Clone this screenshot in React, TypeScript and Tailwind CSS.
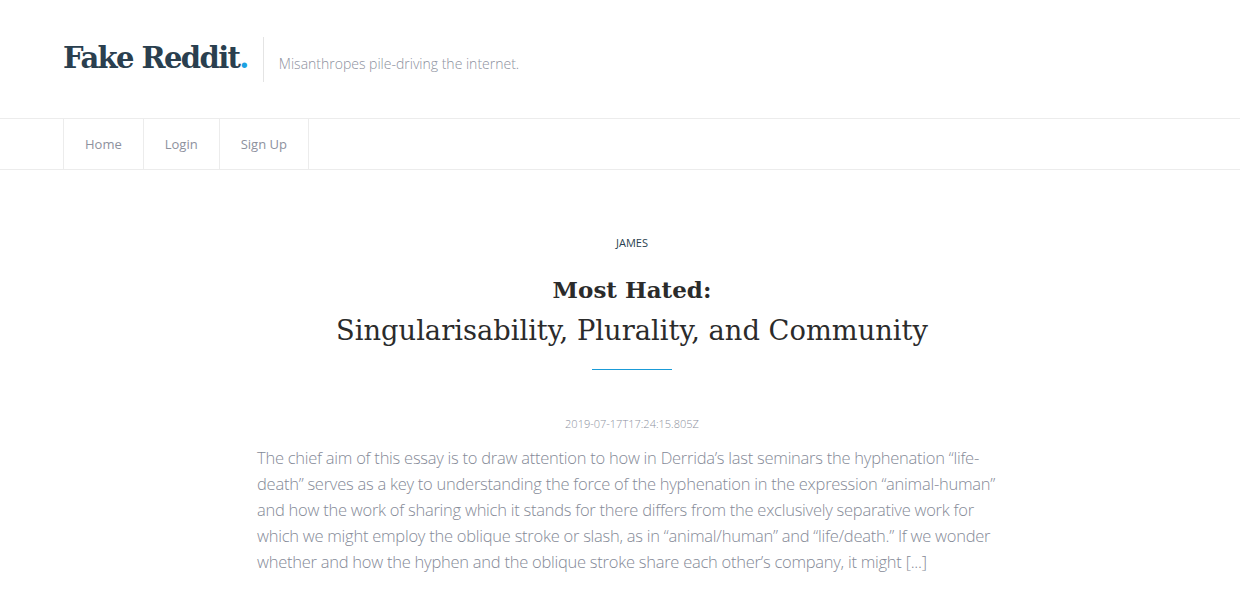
import React from 'react';

const navItems = ['Home', 'Login', 'Sign Up'];

const body =
  'The chief aim of this essay is to draw attention to how in Derrida\u2019s last seminars the hyphenation \u201clife-death\u201d serves as a key to understanding the force of the hyphenation in the expression \u201canimal-human\u201d and how the work of sharing which it stands for there differs from the exclusively separative work for which we might employ the oblique stroke or slash, as in \u201canimal/human\u201d and \u201clife/death.\u201d If we wonder whether and how the hyphen and the oblique stroke share each other\u2019s company, it might [...]';

const App: React.FC = () => {
  return (
    <div className="min-h-[596px] bg-white font-['Open_Sans',sans-serif]">
      {/* header */}
      <header className="h-[119px] border-b border-[#ececec] flex items-center px-[63px]">
        <h1 className="font-['DejaVu_Serif',serif] font-bold text-[29px] tracking-[-1.6px] text-[#2a3f4f] leading-none pb-[2px]">
          Fake Reddit<span className="text-[#1ba1e2]">.</span>
        </h1>
        <div className="ml-[15px] w-px h-[45px] bg-[#e4e4e4]" />
        <p className="ml-[15px] mt-[8px] text-[14px] font-light text-[#8d919e]">
          Misanthropes pile-driving the internet.
        </p>
      </header>

      {/* nav */}
      <nav className="h-[51px] border-b border-[#ececec] px-[63px]">
        <ul className="flex h-full border-l border-[#ececec]">
          {navItems.map((item) => (
            <li
              key={item}
              className="flex items-center pt-[2px] px-[21px] border-r border-[#ececec] text-[13px] text-[#8d919e]"
            >
              {item}
            </li>
          ))}
        </ul>
      </nav>

      {/* post */}
      <main className="flex justify-center pl-[24px] pt-[67px]">
        <article className="w-[750px] flex flex-col items-center">
          <span className="text-[11px] text-[#2a3f4f] uppercase leading-none">James</span>
          <h2 className="mt-[21px] text-center font-['DejaVu_Serif',serif] text-[#2b2b2b] leading-[41px]">
            <span className="block font-bold text-[23px]">Most Hated:</span>
            <span className="block text-[27.3px]">Singularisability, Plurality, and Community</span>
          </h2>
          <div className="mt-[18px] w-[80px] h-px bg-[#1a9bd7]" />
          <time className="mt-[48px] text-[11px] font-light text-[#8d919e] leading-none">
            2019-07-17T17:24:15.805Z
          </time>
          <p className="mt-[16px] self-stretch text-[16.5px] font-light leading-[26px] text-[#858a97] tracking-[-0.25px]">
            {body}
          </p>
        </article>
      </main>
    </div>
  );
};

export default App;
